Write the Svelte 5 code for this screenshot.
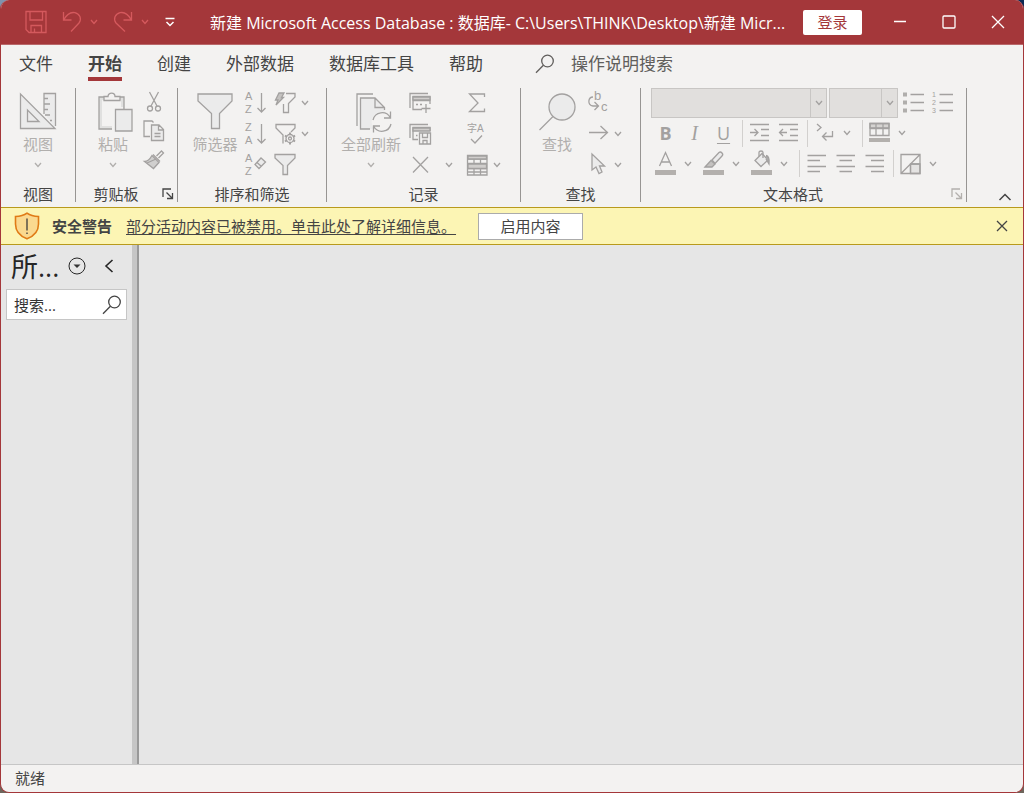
<script>
  const tabs = ['文件', '开始', '创建', '外部数据', '数据库工具', '帮助'];
  let active = $state('开始');

  const bar = '<rect x="4" y="20" width="21" height="5" fill="#b3b0ad" stroke="none"/>';
  const funnel = 'M1 1.5H21V5L13.5 12.5V21.5H9V12.5L1 5Z';

  const icons = {
    save: [22, 24, '<path d="M1 1.5H21V22.5H4L1 19.5Z M5 1.5V10H17.5V1.5 M6 22.5V15.5H16.5V22.5 M9.5 22.5V18.5"/>'],
    undo: [20, 22, '<path d="M1.5 1V9H9.5 M1.8 8.7C5 3 9 .8 13 1.7C18 3 20 8 17 12L9 20.5"/>'],
    redo: [20, 22, '<path d="M18.5 1V9H10.5 M18.2 8.7C15 3 11 .8 7 1.7C2 3 0 8 3 12L12 20.5"/>'],
    custom: [12, 10, '<path d="M1.500 1.500H10.500 M2.500 5L6 8.500L9.500 5" stroke-width="1.500"/>'],
    min: [14, 14, '<path d="M1 6.500H13"/>'],
    max: [14, 14, '<rect x="1" y="1" width="12" height="12" rx="1"/>'],
    close: [14, 14, '<path d="M1 1L13 13M13 1L1 13"/>'],
    dismiss: [12, 12, '<path d="M1 1L11 11M11 1L1 11"/>'],
    search: [20, 20, '<circle cx="12.500" cy="7" r="5.800"/><path d="M8.400 11.200L1 18.800"/>'],
    view: [38, 38, '<path d="M25 21V1.500H36.500V36.500Z" fill="#ebebeb" stroke="none"/><path d="M25 22V1.500H36.500V34 M25 6.500H29M25 12H31M25 17.500H29M26 23H31M31 28.500H33"/><path fill="#ebebeb" d="M1.500 2V36.500H36Z M8.500 18V29.500H20Z"/>'],
    paste: [40, 40, '<path d="M6 5H31V37H6Z" fill="#e0e0df"/><path d="M9 8H28V34H9Z" fill="#f3f2f1" stroke="none"/><path d="M11 8.500V4.500H15C15 0 22 0 22 4.500H27V8.500Z" fill="#f3f2f1"/><path d="M20.500 39V16.500H30" stroke="#f3f2f1" stroke-width="3"/><path d="M22.500 17.500H39V39H22.500Z" fill="#ebebeb"/>'],
    cut: [22, 22, '<path d="M6.500 1L14 15M15.500 1L8 15"/><circle cx="7" cy="17.500" r="2.500"/><circle cx="15" cy="17.500" r="2.500"/>'],
    copy: [22, 22, '<path d="M7 16.500H1V1H9L10.500 2.500"/><path fill="#ebebeb" d="M8.500 5H16L20.500 9.500V20.500H8.500Z M15.500 5V10H20.500 M11.500 13.500H17.500M11.500 16.500H17.500"/>'],
    brush: [22, 22, '<path d="M13.500 7L18.500 2L20.500 4L15.500 9 M10 5.500L17 12.500"/><path fill="#d0cfce" d="M9 6.500L16 13.500L10.500 19.500L1.500 12.500C5 12.500 7 10 9 6.500Z"/><path d="M4 14L13 10"/>'],
    filterBig: [38, 38, '<path fill="#ebebeb" d="M2 2H36V9L23.500 21.500V36.500H15.500V21.500L2 9Z"/>'],
    az: [22, 24, '<text x="0" y="9">A</text><text x="0" y="22">Z</text><path d="M16.500 2V21M12.500 17L16.500 21L20.500 17"/>'],
    za: [22, 24, '<text x="0" y="9">Z</text><text x="0" y="22">A</text><path d="M16.500 2V21M12.500 17L16.500 21L20.500 17"/>'],
    clearSort: [22, 24, '<text x="0" y="9">A</text><text x="0" y="22">Z</text><path d="M10 11.500L16 5L20.500 9L14 15.500Z M12 9.500L16.500 13.500" fill="#ebebeb"/>'],
    filterFlash: [22, 24, '<path d="M12 2.500H21V6L14.500 12.500V21.500H9.500V13"/><path d="M5 2H10L7.500 6.500H9.500L2 14L4 9H1.500Z" fill="#c4c2c0"/>'],
    filterGear: [22, 24, '<path d="M9 21.500V13L2 6V2.500H21V6L17 10"/><circle cx="16" cy="16.500" r="4"/><circle cx="16" cy="16.500" r="1.500"/><path d="M16 10.500V13M16 20V22.500M11 13.500L13 15M21 13.500L19 15M11 19.500L13 18M21 19.500L19 18" stroke-width="2"/>'],
    filter: [22, 24, `<path fill="#ebebeb" d="${funnel}"/>`],
    refresh: [44, 42, '<g transform="translate(6 0)"><path d="M2 34V2H18"/><path fill="#ebebeb" d="M5.500 37V6H20L29.500 15.500V37Z" stroke="none"/><path d="M15 37H5.500V6H20L29.500 15.500V18 M20 6V15.500H29.500"/><circle cx="27" cy="30" r="10.500" fill="#f3f2f1" stroke="none"/><path d="M18 28A9.300 9.300 0 0 1 35.200 25.500M35.500 19.500V26H29 M36 32A9.300 9.300 0 0 1 18.800 34.500M18.500 40.500V34H25"/></g>'],
    newRec: [22, 22, '<path d="M1 16V1.500H19"/><path d="M13 17.500H4V4.500H21V12 M4 8.500H21"/><path d="M4 5H21V8H4Z" fill="#d0cecc"/><path d="M7 12.500H9M11 12.500H13M17 12V21M12.500 16.500H21.500"/>'],
    saveRec: [22, 22, '<path d="M1 15V1.500H19"/><path d="M9 16.500H4V4.500H21V8"/><path d="M4 5H21V8H4Z" fill="#d0cecc"/><path d="M7 12.500H8.500"/><path d="M10.500 10H21.500V21H10.500Z M13.500 10V14.500H18.500V10 M14 21V17.500H18V21" fill="#f3f2f1"/>'],
    del: [22, 22, '<path d="M4 3L19 18.500M19 3L4 18.500"/>'],
    sum: [22, 22, '<path d="M18.500 5V2H3.500L12 11L3.500 19.500H18.500V16.500"/>'],
    spell: [22, 24, '<text x="1" y="10" style="font-size:10px">字A</text><path d="M5 17L9 21L16 13.500"/>'],
    more: [22, 24, '<path d="M1.500 2.500H21V22H1.500Z M1.500 6H21M1.500 10.500H21M1.500 15.500H21M8 6V10.500M14.500 6V10.500M8 15.500V22M14.500 15.500V22M1.500 19H21"/><path d="M2 3H20.500V6H2ZM2 11H20.500V15.500H2Z" fill="#d0cecc"/>'],
    findBig: [38, 40, '<circle cx="24" cy="15" r="13" fill="#ebebeb"/><path d="M15 24.500L1.500 38"/>'],
    replace: [22, 24, '<text x="7" y="9" style="font-size:13px">b</text><text x="14" y="20" style="font-size:13px">c</text><path d="M6 6C1 6 0 14 6 15H11M7.500 11L11.500 15L7.500 19"/>'],
    goto: [22, 22, '<path d="M2 9.500H20.500M13.500 3L20.500 9.500L13.500 16"/>'],
    pointer: [22, 24, '<path fill="#ebebeb" d="M5 1V17L9 14L12 20.500L15 19L12.500 13H17.500Z"/>'],
    bullets: [21, 26, '<path d="M7.500 4.500H21M7.500 12.500H21M7.500 20.500H21"/><path fill="#b0aeac" stroke="none" d="M0 2.500H4V6.500H0ZM0 10.500H4V14.500H0ZM0 18.500H4V22.500H0Z"/>'],
    numbers: [21, 26, '<path d="M7.500 4.500H21M7.500 12.500H21M7.500 20.500H21"/><text x="0" y="7" style="font-size:7px">1</text><text x="0" y="15" style="font-size:7px">2</text><text x="0" y="23" style="font-size:7px">3</text>'],
    indent: [29, 22, '<path d="M5 2.500H24M16 7.500H24M16 13.500H24M5 18.500H24 M5 10.500H13M9.500 7L13 10.500L9.500 14"/>'],
    outdent: [29, 22, '<path d="M5 2.500H24M16 7.500H24M16 13.500H24M5 18.500H24 M13 10.500H5.500M9 7L5.500 10.500L9 14"/>'],
    direction: [29, 22, '<path d="M7 2L11 5.500L7 9M22.500 9V14.500H13M16.500 10.500L12.500 14.500L16.500 18.500"/>'],
    gridColor: [29, 26, '<path d="M5 3.500H24V8H5Z" fill="#d5d3d1"/><path d="M5 3.500H24V15.500H5ZM5 8.500H24M11 3.500V15.500M18 3.500V15.500"/><rect x="4" y="18" width="21" height="4" fill="#b3b0ad" stroke="none"/>'],
    fontColor: [29, 28, '<path d="M8.500 16L14.500 2.500L20.500 16M10.500 12H18.500"/>' + bar],
    highlight: [29, 28, '<path d="M13 10L20 2.500C22 1 25 4 23 6L16 13.500Z" fill="#ebebeb"/><path d="M6 17L12 10.500L16 14L13 17Z" fill="#c4c2c0"/>' + bar],
    bucket: [29, 28, '<path d="M8 10.500L15 3.500L21 10L14 16.500Z" fill="#ebebeb"/><path d="M12 6.500V2.500C12 .5 16 .5 16 2.500V8"/><path d="M19 5.500C22 6 22.500 9 22 14L19 9" fill="#aaa"/>' + bar],
    left: [29, 22, '<path d="M5.500 2.500H24M5.500 7.500H18M5.500 13.500H24M5.500 18.500H18"/>'],
    center: [29, 22, '<path d="M5.500 2.500H24M8.500 7.500H21M5.500 13.500H24M8.500 18.500H21"/>'],
    right: [29, 22, '<path d="M5.500 2.500H24M11 7.500H24M5.500 13.500H24M11 18.500H24"/>'],
    altRow: [29, 24, '<path d="M14.500 12H24V21.500H14.500Z" fill="#e4e3e2"/><path d="M5 2.500H24V21.500H5ZM5 21.500L24 2.500M14.500 12V21.500M14.500 12H24"/>'],
    launcher: [12, 12, '<path d="M1 9V1H9 M4.500 4.500L10.500 10.500M10.500 5V10.500H5"/>'],
    collapse: [14, 8, '<path d="M1.500 7L7 1.500L12.500 7" stroke-width="1.500"/>'],
    shield: [26, 28, '<path d="M13 1.200C16 3.500 20 4.500 24.500 4.500V12C24.500 20 19 24.500 13 26.800C7 24.500 1.500 20 1.500 12V4.500C6 4.500 10 3.500 13 1.200Z" fill="#fad98f" stroke="#e07b16" stroke-width="1.600"/><path d="M13 6.500V18.500M13 20.500V22" stroke="#4a4540" stroke-width="1.400"/>'],
    dropCircle: [18, 18, '<circle cx="9" cy="9" r="8" stroke-width="1"/><path d="M5.500 7.500H12.500L9 11Z" fill="#333" stroke="none"/>'],
    back: [10, 14, '<path d="M8.500 1L2 7L8.500 13" stroke-width="1.600"/>']
  };
</script>

{#snippet ic(name)}
  <svg width={icons[name][0]} height={icons[name][1]} viewBox="0 0 {icons[name][0]} {icons[name][1]}" aria-hidden="true">{@html icons[name][2]}</svg>
{/snippet}

{#snippet chev()}
  <svg width="8" height="6" viewBox="0 0 8 6" aria-hidden="true"><path d="M1 1L4 4.500L7 1" /></svg>
{/snippet}

{#snippet tool(name, label, arrow = false)}
  <div class="tool">
    <button class="ico" disabled aria-label={label}>{@render ic(name)}</button>
    {#if arrow}<button class="arrow" disabled aria-label="{label}选项">{@render chev()}</button>{/if}
  </div>
{/snippet}

{#snippet big(name, label, arrow = false)}
  <button class="big" disabled>
    <span class="pic">{@render ic(name)}</span>
    <span>{label}</span>
    {#if arrow}<span class="down">{@render chev()}</span>{/if}
  </button>
{/snippet}

<div class="window">
  <header class="title">
    <div class="quick">
      <button class="dim" aria-label="保存">{@render ic('save')}</button>
      <button class="dim" aria-label="撤消">{@render ic('undo')}{@render chev()}</button>
      <button class="dim" aria-label="恢复">{@render ic('redo')}{@render chev()}</button>
      <button aria-label="自定义快速访问工具栏">{@render ic('custom')}</button>
    </div>
    <div class="caption">新建 Microsoft Access Database : 数据库- C:\Users\THINK\Desktop\新建 Micr...</div>
    <button class="login">登录</button>
    <div class="controls">
      <button aria-label="最小化">{@render ic('min')}</button>
      <button aria-label="最大化">{@render ic('max')}</button>
      <button aria-label="关闭">{@render ic('close')}</button>
    </div>
  </header>

  <nav class="tabs">
    {#each tabs as tab}
      <button class:active={tab === active} onclick={() => (active = tab)}>{tab}</button>
    {/each}
    <button class="tell">{@render ic('search')}<span>操作说明搜索</span></button>
  </nav>

  <div class="ribbon">
    <section class="group g-view">
      <div class="body">{@render big('view', '视图', true)}</div>
      <div class="name"><span>视图</span></div>
    </section>
    <section class="group g-clip">
      <div class="body">
        {@render big('paste', '粘贴', true)}
        <div class="col tight">
          {@render tool('cut', '剪切')}
          {@render tool('copy', '复制')}
          {@render tool('brush', '格式刷')}
        </div>
      </div>
      <div class="name with-launch"><span>剪贴板</span><button class="launch" aria-label="剪贴板窗格">{@render ic('launcher')}</button></div>
    </section>
    <section class="group g-sort">
      <div class="body">
        {@render big('filterBig', '筛选器')}
        <div class="col">
          {@render tool('az', '升序')}
          {@render tool('za', '降序')}
          {@render tool('clearSort', '取消排序')}
        </div>
        <div class="col">
          {@render tool('filterFlash', '选择', true)}
          {@render tool('filterGear', '高级', true)}
          {@render tool('filter', '切换筛选')}
        </div>
      </div>
      <div class="name"><span>排序和筛选</span></div>
    </section>
    <section class="group g-rec">
      <div class="body">
        {@render big('refresh', '全部刷新', true)}
        <div class="col spread">
          {@render tool('newRec', '新建')}
          {@render tool('saveRec', '保存记录')}
          {@render tool('del', '删除', true)}
        </div>
        <div class="col">
          {@render tool('sum', '合计')}
          {@render tool('spell', '拼写检查')}
          {@render tool('more', '其他', true)}
        </div>
      </div>
      <div class="name"><span>记录</span></div>
    </section>
    <section class="group g-find">
      <div class="body">
        {@render big('findBig', '查找')}
        <div class="col">
          {@render tool('replace', '替换')}
          {@render tool('goto', '转至', true)}
          {@render tool('pointer', '选择', true)}
        </div>
      </div>
      <div class="name"><span>查找</span></div>
    </section>
    <section class="group g-text">
      <div class="body lines">
        <div class="line first">
          <label class="combo font"><select disabled aria-label="字体"></select><span>{@render chev()}</span></label>
          <label class="combo size"><select disabled aria-label="字号"></select><span>{@render chev()}</span></label>
          <button class="list" disabled aria-label="项目符号">{@render ic('bullets')}</button>
          <button class="list" disabled aria-label="编号">{@render ic('numbers')}</button>
        </div>
        <div class="line second">
          <button class="letter b" disabled>B</button>
          <button class="letter i" disabled>I</button>
          <button class="letter u" disabled>U</button>
          <i class="bar"></i>
          {@render tool('indent', '增加缩进')}
          {@render tool('outdent', '减少缩进')}
          <i class="bar"></i>
          {@render tool('direction', '文字方向', true)}
          <i class="bar"></i>
          {@render tool('gridColor', '网格线', true)}
        </div>
        <div class="line">
          {@render tool('fontColor', '字体颜色', true)}
          {@render tool('highlight', '突出显示', true)}
          {@render tool('bucket', '背景色', true)}
          <i class="bar"></i>
          {@render tool('left', '左对齐')}
          {@render tool('center', '居中')}
          {@render tool('right', '右对齐')}
          <i class="bar"></i>
          {@render tool('altRow', '可选行颜色', true)}
        </div>
      </div>
      <div class="name with-launch"><span>文本格式</span><button class="launch off" disabled aria-label="文本格式设置">{@render ic('launcher')}</button></div>
    </section>
    <button class="collapse" aria-label="折叠功能区">{@render ic('collapse')}</button>
  </div>

  <div class="message">
    {@render ic('shield')}
    <strong>安全警告</strong>
    <a href="#details">部分活动内容已被禁用。单击此处了解详细信息。</a>
    <button class="enable">启用内容</button>
    <button class="dismiss" aria-label="关闭此消息">{@render ic('dismiss')}</button>
  </div>

  <main>
    <aside>
      <div class="head">
        <h2>所...</h2>
        <button aria-label="对象筛选">{@render ic('dropCircle')}</button>
        <button aria-label="折叠窗格">{@render ic('back')}</button>
      </div>
      <div class="search">
        <input type="text" placeholder="搜索..." aria-label="搜索" />
        <button aria-label="开始搜索">{@render ic('search')}</button>
      </div>
    </aside>
    <div class="splitter"></div>
    <div class="canvas"></div>
  </main>

  <footer>就绪</footer>
</div>

<style>
  :global(body) {
    margin: 0;
    background: linear-gradient(90deg, #7f93ae, #0c2a55) top / 100% 50% no-repeat, #6e665c;
  }
  .window {
    box-sizing: border-box;
    min-height: 100vh;
    display: flex;
    flex-direction: column;
    border: solid #a4373a;
    border-width: 0 1px 1px;
    border-radius: 9px;
    overflow: hidden;
    background: #f3f2f1;
    color: #444;
    font: 15px/20px "Open Sans", "Noto Sans CJK SC", sans-serif;
  }
  button {
    display: flex;
    align-items: center;
    justify-content: center;
    padding: 0;
    border: 0;
    background: none;
    color: inherit;
    font: inherit;
    white-space: nowrap;
  }
  svg {
    display: block;
    flex: none;
    overflow: visible;
    fill: none;
    stroke: currentColor;
    stroke-width: 1.3;
  }
  svg :global(text) {
    font-family: "Liberation Sans", "Noto Sans CJK SC", sans-serif;
    font-size: 11px;
    fill: currentColor;
    stroke: none;
  }

  .title {
    display: flex;
    align-items: center;
    height: 44px;
    padding-left: 24px;
    background: #a4373a;
    border-bottom: 1px solid #b9686a;
    color: #fff;
  }
  .quick {
    display: flex;
    align-items: center;
    gap: 15px;
    width: 185px;
  }
  .quick button { gap: 8px; }
  .quick .dim { color: #d4595d; }
  .caption {
    flex: 1;
    min-width: 0;
    padding-top: 2px;
    overflow: hidden;
    font-size: 16px;
    white-space: nowrap;
  }
  .login {
    width: 59px;
    height: 25px;
    border-radius: 2px;
    background: #fff;
    color: #a4373a;
  }
  .controls {
    display: flex;
    padding-left: 13px;
  }
  .controls button { width: 49px; height: 44px; }
  .controls button:last-child { width: 50px; }

  .tabs {
    display: flex;
    height: 42px;
    padding-left: 18px;
    gap: 35px;
    font-size: 17px;
  }
  .tabs button {
    height: 36px;
    box-sizing: border-box;
    padding-top: 5px;
    border-bottom: 4px solid transparent;
  }
  .tabs .active {
    font-weight: 700;
    border-color: #a4373a;
  }
  .tabs .tell {
    margin-left: 17px;
    gap: 16px;
    color: #605e5c;
  }

  .ribbon {
    display: flex;
    padding: 1px 0 5px;
    border-bottom: 1px solid #e1dfdd;
    margin-bottom: -1px;
  }
  .group {
    display: flex;
    flex-direction: column;
    border-right: 1px solid #979593;
  }
  .body {
    display: flex;
    height: 92px;
    color: #a3a1a0;
  }
  .name {
    display: flex;
    align-items: center;
    margin-top: 6px;
    line-height: 16px;
  }
  .name span { flex: 1; text-align: center; }
  .with-launch span { padding-right: 6px; }
  .launch { width: 15px; justify-content: flex-start; }
  .launch.off { color: #b3b0ad; }
  .g-view .body { padding: 0 18px; }
  .g-clip .body { padding: 0 12px 0 17px; gap: 10px; }
  .g-sort .body { padding: 0 12px 0 14px; gap: 7px; }
  .g-sort .big { width: 46px; }
  .g-rec .body { padding: 0 14px 0 14px; gap: 8px; }
  .g-find .body { padding: 0 13px 0 17px; gap: 11px; }
  .g-text .body { padding: 0 8px 0 10px; }

  .big {
    flex-direction: column;
    justify-content: flex-start;
    color: #b1afad;
  }
  .pic {
    height: 42px;
    margin-top: 4px;
    color: #a3a1a0;
  }
  .big span { flex: none; }
  .down { margin-top: 8px; }

  .col { display: flex; flex-direction: column; margin-top: -1px; }
  .tool { display: flex; align-items: center; height: 31px; }
  .tight .tool { height: 29px; }
  .arrow { width: 18px; height: 100%; }
  .spread .arrow { margin-left: 9px; }

  .lines { flex-direction: column; }
  .line { display: flex; align-items: center; height: 31px; }
  .line.first { height: 30px; }
  .line.second { height: 30px; }
  .lines .arrow { width: 16px; margin-right: 3px; }
  .combo {
    display: flex;
    box-sizing: border-box;
    height: 30px;
    margin-right: 2px;
    border: 1px solid #c8c6c4;
    background: #e1dfdd;
  }
  .font { width: 176px; }
  .size { width: 69px; }
  .combo select {
    flex: 1;
    min-width: 0;
    appearance: none;
    border: 0;
    background: none;
  }
  .combo span {
    display: grid;
    place-items: center;
    width: 15px;
    border-left: 1px solid #c8c6c4;
  }
  .list { margin: 0 5px 0 3px; }
  .letter { width: 29px; height: 24px; font-size: 18px; }
  .b { font-weight: 700; }
  .i { font-family: "Liberation Serif", serif; font-style: italic; font-size: 20px; }
  .u { text-decoration: underline; text-underline-offset: 3px; }
  .bar {
    width: 1px;
    height: 27px;
    margin: 0 2px 0 4px;
    background: #d2d0ce;
  }
  .collapse {
    align-self: flex-end;
    width: 20px;
    height: 10px;
    margin: 0 8px 0 auto;
  }

  .message {
    display: flex;
    align-items: center;
    box-sizing: border-box;
    height: 38px;
    padding: 0 15px 0 13px;
    background: #fcf5b4;
    border: solid #b89a1c;
    border-width: 1px 0;
  }
  .message strong { margin: 0 14px 0 12px; }
  .message a { color: #444; text-underline-offset: 2px; }
  .enable {
    width: 105px;
    height: 27px;
    margin-left: 22px;
    border: 1px solid #ababab;
    background: #fff;
  }
  .dismiss { margin-left: auto; }

  main { flex: 1; display: flex; background: #e6e6e6; }
  aside { width: 131px; }
  .head {
    display: flex;
    align-items: center;
    height: 44px;
    padding-left: 10px;
    color: #262626;
  }
  .head h2 { margin: 0; width: 58px; font-size: 27px; font-weight: 400; white-space: nowrap; line-height: 40px; }
  .head button { margin-right: 18px; height: 40px; padding-bottom: 2px; }
  .search {
    display: flex;
    align-items: center;
    box-sizing: border-box;
    height: 31px;
    margin: 0 5px;
    padding: 0 4px 0 7px;
    border: 1px solid #c6c6c6;
    background: #fff;
  }
  .search input {
    flex: 1;
    min-width: 0;
    padding: 0;
    border: 0;
    outline: 0;
    background: none;
    font: inherit;
  }
  .search input::placeholder { color: #333; opacity: 1; }
  .splitter {
    width: 5px;
    background: #c6c6c6;
    border-right: 2px solid #999;
  }
  .canvas { flex: 1; }
  footer {
    padding: 3px 14px 4px;
    border-top: 1px solid #c6c6c6;
  }
</style>
